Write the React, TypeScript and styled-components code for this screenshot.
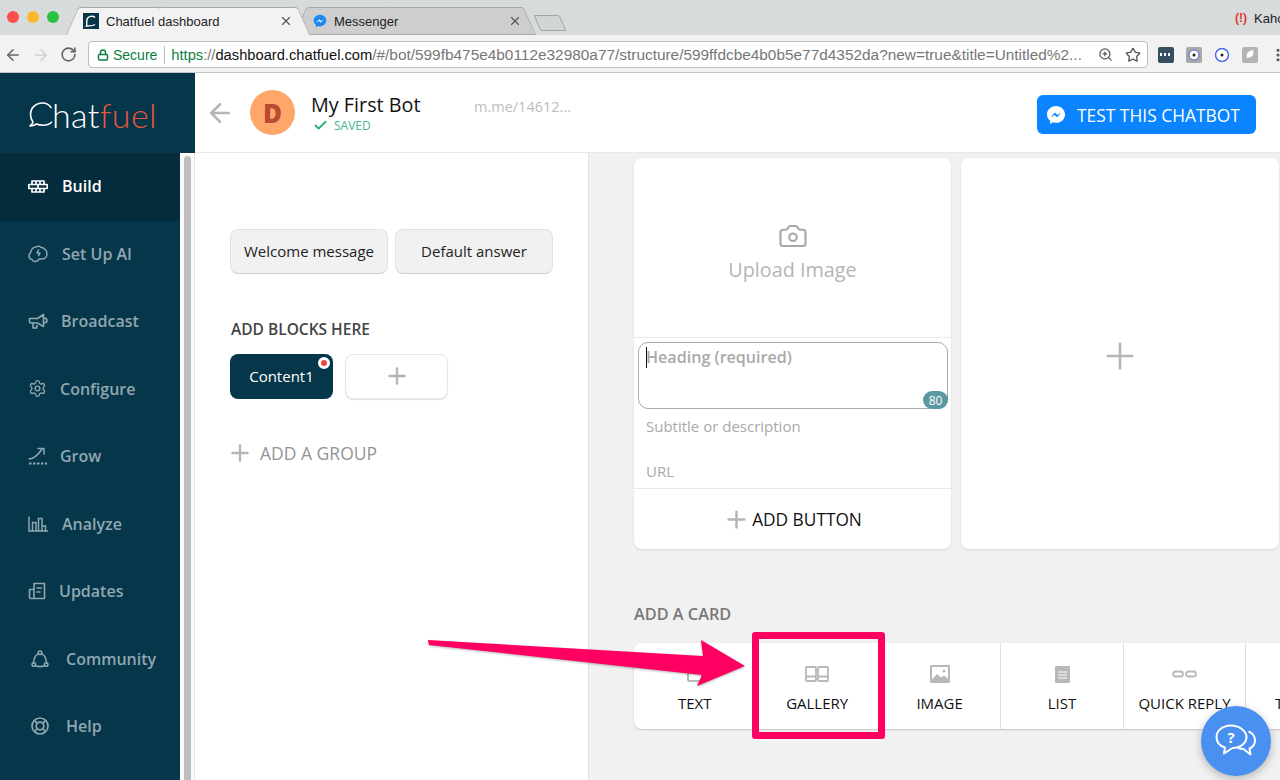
import React from "react";
import styled, { createGlobalStyle } from "styled-components";
import { ArrowLeft, Camera, Check, Plus, RotateCw, Settings, Star, X, ZoomIn, Lock, EllipsisVertical } from "lucide-react";

const GlobalStyle = createGlobalStyle`
  html, body { margin: 0; padding: 0; background: #fff; }
  body { font-family: "Open Sans", "Liberation Sans", sans-serif; }
  * { box-sizing: border-box; }
`;

const Screen = styled.div`
  position: relative;
  width: 1280px;
  height: 780px;
  overflow: hidden;
  display: flex;
  flex-direction: column;
`;

/* browser chrome */
const TabStrip = styled.div`
  height: 35px;
  flex: none;
  display: flex;
  align-items: flex-end;
  padding-left: 7px;
  background: #d7dbdb;
  font-family: "Liberation Sans", sans-serif;
`;

const Lights = styled.div`
  display: flex;
  gap: 8px;
  align-self: flex-start;
  margin-top: 11px;
`;

const Light = styled.span<{ $color: string }>`
  width: 12px;
  height: 12px;
  border-radius: 50%;
  background: ${(p) => p.$color};
`;

const Tab = styled.div<{ $active?: boolean }>`
  position: relative;
  z-index: ${(p) => (p.$active ? 2 : 1)};
  height: 28px;
  width: ${(p) => (p.$active ? 232 : 230)}px;
  margin-left: ${(p) => (p.$active ? 13 : -4)}px;
  padding: ${(p) => (p.$active ? "0 11px" : "0 8px 0 13px")};
  display: flex;
  align-items: center;
  gap: 7px;
  font-size: 13px;
  color: #222;

  &::before,
  &::after {
    content: "";
    position: absolute;
    top: 0;
    bottom: 0;
    width: 60%;
    z-index: -1;
    background: ${(p) => (p.$active ? "#f2f2f2" : "#cecece")};
    border: 1px solid #a8a8a8;
    border-bottom: ${(p) => (p.$active ? "none" : "1px solid #a8a8a8")};
    border-radius: 3px 3px 0 0;
  }
  &::before {
    left: 0;
    border-right: none;
    transform: skewX(-24deg);
  }
  &::after {
    right: 0;
    border-left: none;
    transform: skewX(24deg);
  }
`;

const TabClose = styled(X)`
  margin-left: auto;
  color: #555;
`;

const NewTab = styled.div`
  width: 26px;
  height: 16px;
  margin: 0 0 4px 7px;
  background: #d2d5d5;
  border: 1px solid #a4a4a4;
  border-radius: 2px;
  transform: skewX(24deg);
`;

const ProfileChip = styled.div`
  margin-left: auto;
  align-self: flex-start;
  width: 45px;
  margin-top: 11px;
  display: flex;
  gap: 7px;
  font-size: 13px;
  color: #222;
  white-space: nowrap;
  overflow: hidden;
`;

const ProfileMark = styled.span`
  color: #e03a30;
  font-size: 12px;
  font-weight: 700;
`;

const Toolbar = styled.div`
  height: 38px;
  flex: none;
  display: flex;
  align-items: flex-start;
  padding-top: 6px;
  background: #f2f2f2;
  border-bottom: 1px solid #c4c4c4;
  font-family: "Liberation Sans", sans-serif;
`;

const NavButtons = styled.div`
  width: 88px;
  flex: none;
  height: 27px;
  padding-left: 4px;
  display: flex;
  align-items: center;
  gap: 10px;
  color: #666;
`;

const AddressBox = styled.div`
  width: 1060px;
  flex: none;
  height: 27px;
  display: flex;
  align-items: center;
  padding: 0 6px 0 8px;
  background: #fff;
  border: 1px solid #bdbdbd;
  border-radius: 4px;
  font-size: 14px;
  white-space: nowrap;
`;

const Secure = styled.span`
  display: flex;
  align-items: center;
  gap: 4px;
  color: #0b8043;
  padding-right: 7px;
  border-right: 1px solid #bbb;
  margin-right: 6px;
  line-height: 18px;
`;

const Url = styled.span<{ $tone: string; $size?: number }>`
  color: ${(p) => p.$tone};
  font-size: ${(p) => p.$size ?? 14.7}px;
`;

const AddressActions = styled.span`
  margin-left: auto;
  display: flex;
  align-items: center;
  gap: 12px;
  color: #555;
`;

const Extensions = styled.div`
  display: flex;
  align-items: center;
  gap: 12px;
  height: 27px;
  margin-left: 10px;
`;

const Extension = styled.span<{ $bg: string; $round?: boolean }>`
  width: 16px;
  height: 16px;
  display: flex;
  align-items: center;
  justify-content: center;
  background: ${(p) => p.$bg};
  border-radius: ${(p) => (p.$round ? "50%" : "2px")};
`;

/* page */
const Page = styled.div`
  flex: 1;
  min-height: 0;
  display: flex;
`;

const Sidebar = styled.aside`
  width: 195px;
  flex: none;
  display: flex;
  flex-direction: column;
`;

const LogoBar = styled.div`
  height: 80px;
  flex: none;
  display: flex;
  align-items: center;
  padding: 2px 0 0 29px;
  background: #063649;
`;

const LogoText = styled.span`
  font-family: "Lato", sans-serif;
  font-weight: 300;
  font-size: 34px;
  letter-spacing: 0.4px;
  color: #fff;
  margin-left: -1px;
`;

const LogoAccent = styled.span`
  color: #e8553f;
`;

const SideBody = styled.div`
  flex: 1;
  min-height: 0;
  display: flex;
`;

const Nav = styled.nav`
  width: 180px;
  background: #063649;
`;

const NavRow = styled.div<{ $active?: boolean; $indent: number; $gap: number }>`
  height: 67.5px;
  padding-bottom: 1px;
  display: flex;
  align-items: center;
  gap: ${(p) => p.$gap}px;
  padding-left: ${(p) => p.$indent}px;
  background: ${(p) => (p.$active ? "#052c3c" : "transparent")};
  color: ${(p) => (p.$active ? "#fff" : "#8fa7b1")};
  font-size: 16px;
  font-weight: 600;
`;

const ScrollTrack = styled.div`
  width: 15px;
  padding: 3px 3px 0 4px;
  background: #fafafa;
  border-right: 1px solid #e6e6e6;
`;

const ScrollThumb = styled.div`
  height: 100%;
  background: #bfbfbf;
  border-radius: 4px 4px 0 0;
`;

const Main = styled.main`
  flex: 1;
  min-width: 0;
  display: flex;
  flex-direction: column;
`;

const TopBar = styled.header`
  height: 80px;
  flex: none;
  display: flex;
  align-items: center;
  padding: 0 24px 0 15px;
  background: #fff;
  border-bottom: 1px solid #e8e8e8;
`;

const BackIcon = styled(ArrowLeft)`
  color: #b5b5b5;
  flex: none;
  margin: 0 -5px;
`;

const Avatar = styled.div`
  width: 45px;
  height: 45px;
  margin: 0 16px 0 20px;
  flex: none;
  display: flex;
  align-items: center;
  justify-content: center;
  border-radius: 50%;
  background: #ffa76b;
  color: #bb4a30;
  font-size: 26px;
  font-weight: 800;
`;

const BotInfo = styled.div`
  width: 163px;
  margin-top: -1px;
`;

const BotName = styled.div`
  font-size: 19.8px;
  line-height: 27px;
  color: #111;
`;

const SavedRow = styled.div`
  display: flex;
  align-items: center;
  gap: 6px;
  padding-left: 2px;
  font-size: 12px;
  line-height: 16px;
  color: #45b98c;
`;

const BotLink = styled.div`
  margin-top: -12px;
  font-size: 14.5px;
  color: #bcbcbc;
`;

const TestButton = styled.button`
  margin: 3px 0 0 auto;
  width: 219px;
  height: 39px;
  display: flex;
  align-items: center;
  gap: 11px;
  padding: 1px 0 0 9px;
  border: none;
  border-radius: 6px;
  background: #0a84ff;
  color: #fff;
  font-family: inherit;
  font-size: 17.4px;
`;

const Body = styled.div`
  flex: 1;
  min-height: 0;
  display: flex;
`;

const LeftPane = styled.section`
  width: 394px;
  flex: none;
  padding: 76px 0 0 35px;
  background: #fff;
  border-right: 1px solid #e2e2e2;
`;

const ButtonRow = styled.div`
  display: flex;
  gap: 7px;
`;

const GreyButton = styled.div`
  width: 158px;
  height: 45px;
  padding-bottom: 2px;
  display: flex;
  align-items: center;
  justify-content: center;
  background: #f2f1f2;
  border: 1px solid #e2e2e2;
  border-bottom-color: #d0d0d0;
  border-radius: 8px;
  font-size: 15px;
  color: #222;
`;

const BlocksTitle = styled.h3`
  margin: 44px 0 14px 1px;
  font-size: 15.5px;
  line-height: 22px;
  font-weight: 600;
  color: #444;
`;

const BlockRow = styled.div`
  display: flex;
  gap: 12px;
`;

const BlockCard = styled.div<{ $filled?: boolean }>`
  position: relative;
  width: 103px;
  height: 45px;
  padding-bottom: 2px;
  display: flex;
  align-items: center;
  justify-content: center;
  border-radius: 8px;
  font-size: 15px;
  color: ${(p) => (p.$filled ? "#fff" : "#b5b5b5")};
  background: ${(p) => (p.$filled ? "#063649" : "#fff")};
  border: ${(p) => (p.$filled ? "none" : "1px solid #e8e8e8")};
  box-shadow: ${(p) => (p.$filled ? "none" : "0 1px 1px #e2e2e2")};
`;

const StatusDot = styled.span`
  position: absolute;
  top: 3px;
  right: 3px;
  width: 12px;
  height: 12px;
  border-radius: 50%;
  background: #e8493f;
  border: 3px solid #fff;
`;

const AddGroup = styled.div`
  margin: 41px 0 0 -3px;
  display: flex;
  align-items: center;
  gap: 7px;
  font-size: 17.5px;
  line-height: 24px;
  color: #949494;
`;

const GreyPlus = styled(Plus)`
  color: #b5b5b5;
  flex: none;
`;

const RightPane = styled.section`
  flex: 1;
  min-width: 0;
  padding: 5px 0 0 45px;
  background: #f2f1f2;
`;

const CardRow = styled.div`
  display: flex;
  gap: 10px;
`;

const Card = styled.div<{ $wide?: boolean }>`
  width: ${(p) => (p.$wide ? 318 : 317)}px;
  height: 391px;
  flex: none;
  display: flex;
  flex-direction: column;
  background: #fff;
  border-radius: 8px;
  box-shadow: 0 1px 2px rgba(0, 0, 0, 0.12);
`;

const EmptyCardBody = styled.div`
  flex: 1;
  padding-top: 4px;
  display: flex;
  align-items: center;
  justify-content: center;
  color: #b5b5b5;
`;

const UploadArea = styled.div`
  height: 180px;
  flex: none;
  display: flex;
  flex-direction: column;
  align-items: center;
  padding-top: 63px;
  gap: 5px;
  border-bottom: 1px solid #e8e8e8;
  color: #a8a8a8;
`;

const UploadLabel = styled.div`
  font-size: 19.8px;
  line-height: 27px;
  color: #b5b5b5;
`;

const HeadingBox = styled.div`
  position: relative;
  height: 67px;
  margin: 4px 3px 0 4px;
  padding: 3px 7px;
  border: 1px solid #aaa;
  border-radius: 10px;
  font-size: 16.1px;
  line-height: 23px;
  font-weight: 600;
  color: #a9a9a9;
`;

const Caret = styled.span`
  position: absolute;
  left: 7px;
  top: 4px;
  width: 1px;
  height: 21px;
  background: #111;
`;

const CountBadge = styled.span`
  position: absolute;
  right: -1px;
  bottom: -1px;
  width: 25px;
  height: 18px;
  display: flex;
  align-items: center;
  justify-content: center;
  border-radius: 9px;
  background: #5b98a0;
  color: #fff;
  font-size: 12px;
  font-weight: 400;
`;

const FieldLine = styled.div`
  height: 45px;
  padding: 7px 0 0 12px;
  font-size: 15px;
  line-height: 20px;
  color: #a9a9a9;
`;

const FieldLast = styled(FieldLine)`
  height: 35px;
  padding-top: 7px;
  border-bottom: 1px solid #e8e8e8;
`;

const AddButton = styled.div`
  flex: 1;
  display: flex;
  align-items: center;
  justify-content: center;
  gap: 2px;
  font-size: 17.3px;
  color: #111;
`;

const AddCardTitle = styled.h3`
  margin: 54px 0 18px;
  font-size: 16.3px;
  line-height: 22px;
  font-weight: 600;
  color: #777;
`;

const CardTypes = styled.div`
  width: 800px;
  height: 86px;
  display: flex;
  background: #fff;
  border-radius: 8px 0 0 8px;
  box-shadow: 0 1px 2px rgba(0, 0, 0, 0.18);
`;

const CardType = styled.div`
  width: 122.45px;
  flex: none;
  display: flex;
  flex-direction: column;
  align-items: center;
  border-right: 1px solid #dedede;
  font-size: 15px;
  color: #111;

  &:last-child {
    padding-right: 12px;
  }
`;

const CardTypeIcon = styled.div`
  height: 50px;
  padding-top: 12px;
  display: flex;
  align-items: center;
  justify-content: center;
  color: #b8b8b8;
`;

/* things lying over the page */
const Highlight = styled.div`
  position: absolute;
  left: 752px;
  top: 632px;
  width: 133px;
  height: 107px;
  border: 7px solid #ff0062;
  border-radius: 3px;
`;

const ArrowDrawing = styled.svg`
  position: absolute;
  left: 420px;
  top: 630px;
  filter: drop-shadow(0 1px 1px rgba(0, 0, 0, 0.3));
`;

const HelpBubble = styled.div`
  position: absolute;
  left: 1201px;
  top: 706px;
  width: 70px;
  height: 70px;
  display: flex;
  align-items: center;
  justify-content: center;
  border-radius: 50%;
  background: #4a90f0;
  box-shadow: 0 3px 10px rgba(0, 0, 0, 0.25);
`;

/* drawings */
const stroke = {
  fill: "none",
  stroke: "currentColor",
  strokeWidth: 2,
  strokeLinecap: "round" as const,
  strokeLinejoin: "round" as const,
};

const BuildIcon = () => (
  <svg width="20" height="13" viewBox="0 0 20 13" {...stroke} strokeWidth={1.7} strokeLinecap="butt">
    <path d="M4 1h12v3.500h3.200v4H16V12H4V8.500H.8v-4H4z" />
    <path d="M4 4.500h12M4 8.500h12M8 1v3.500M12 1v3.500M10 4.500v4M8 8.500V12M12 8.500V12" />
  </svg>
);
const BrainIcon = () => (
  <svg width="20" height="18" viewBox="0 0 20 18" {...stroke} strokeWidth={1.5}>
    <path d="M6.500 16.500c-1 0-2-.8-2.200-1.800C2.300 14.300 1 12.700 1 10.800c0-1.500.7-2.700 1.800-3.400C3 4.400 5.300 2 8 2c1-1 4-1.200 5.200.5 3 .2 5.800 2.800 5.800 6.300 0 3-2 5.200-4.800 5.200H11c-.5 1.500-2.500 2.500-4.500 2.500z" />
    <path d="M10.500 5 9 8h3l-1.500 2.500" />
  </svg>
);
const MegaphoneIcon = () => (
  <svg width="20" height="17" viewBox="0 0 20 17" {...stroke} strokeWidth={1.6}>
    <path d="M1.500 5.500h8L15.500 1.500v12L9.500 10H2.800C2 10 1.500 9.500 1.500 8.800z" />
    <path d="M15.500 5c2.200 0 3.500 1 3.500 2.500S17.700 10 15.500 10M5 10v5h3.500l.5-2.500" />
  </svg>
);
const GrowIcon = () => (
  <svg width="20" height="18" viewBox="0 0 20 18" {...stroke} strokeWidth={1.5}>
    <path d="M1 12c5-.5 8-3 13.500-10.500M10 1.500h6V7" />
    <path d="M1 16.500h18" strokeDasharray="2.500 1.500" strokeLinecap="butt" strokeWidth={1.800} />
  </svg>
);
const BarsIcon = () => (
  <svg width="20" height="16" viewBox="0 0 20 16" {...stroke} strokeWidth={1.500} strokeLinecap="butt" strokeLinejoin="miter">
    <path d="M1 .5V15h19M4.500 15V6.500H8V15M8 15V9.500M10.500 15V2.500H14V15M14 15v-5h3.500v5" />
  </svg>
);
const UpdatesIcon = () => (
  <svg width="18" height="18" viewBox="0 0 18 18" {...stroke} strokeWidth={1.6}>
    <path d="M6 1.500h10.500v15H2.500a1 1 0 0 1-1-1V7.500h4.500zM6 7.500v9" />
    <path d="M9 6h4.500M9 10h3" />
  </svg>
);
const CommunityIcon = () => (
  <svg width="18" height="18" viewBox="0 0 18 18" {...stroke} strokeWidth={1.5}>
    <circle cx="9" cy="2.800" r="1.800" />
    <circle cx="2.800" cy="14.500" r="1.800" />
    <circle cx="15.200" cy="14.500" r="1.800" />
    <path d="M7.300 3.600C4.500 5 3 8 2.500 12.700M10.700 3.600C13.500 5 15 8 15.500 12.700M4.500 15.500c3 1.500 6 1.500 9 0" />
  </svg>
);
const HelpIcon = () => (
  <svg width="18" height="18" viewBox="0 0 18 18" {...stroke} strokeWidth={1.7}>
    <circle cx="9" cy="9" r="8" />
    <circle cx="9" cy="9" r="3.800" />
    <path d="M3.500 3.500l2.800 2.800M14.500 3.500l-2.800 2.800M3.500 14.500l2.800-2.800M14.500 14.500l-2.800-2.800" />
  </svg>
);
const MessengerGlyph = ({ size, bg, fg }: { size: number; bg: string; fg: string }) => (
  <svg width={size} height={size} viewBox="0 0 20 20">
    <path
      d="M10 1C5 1 1 4.700 1 9.400c0 2.600 1.200 4.800 3.200 6.300V19l3-1.700c.9.300 1.800.4 2.800.4 5 0 9-3.700 9-8.300S15 1 10 1z"
      fill={bg}
    />
    <path d="M4.500 12.200 9 7.500l2.400 2.400 4.200-2.400-4.600 4.800-2.300-2.400z" fill={fg} />
  </svg>
);
const ChatfuelFavicon = () => (
  <svg width="16" height="16" viewBox="0 0 16 16">
    <rect width="16" height="16" fill="#063649" />
    <path d="M12 4.500C10 2.600 5 2.800 4 6.500c-.6 2.500 0 5.500-.5 6.500 2-.5 6 .5 8.500-1.500" fill="none" stroke="#fff" strokeWidth="1.400" />
  </svg>
);
const LogoBubble = () => (
  <svg width="24" height="25" viewBox="0 0 24 25" fill="none" stroke="#fff" strokeWidth="1.600" strokeLinecap="round" strokeLinejoin="round">
    <path d="M22 5.500C20 2.500 17 1 13.500 1 6.500 1 1.500 6 1.500 12.500c0 3 1 5.500 2.500 7.500-.5 1.500-1.500 3-3 4 3 0 5-1 6.500-2 1.800.8 4 1.200 6.500 1.200 3.500 0 6.500-1 8.500-3" />
  </svg>
);
const TextCardIcon = () => (
  <svg width="16" height="16" viewBox="0 0 16 16" fill="none" stroke="currentColor" strokeWidth="2">
    <rect x="1" y="1" width="14" height="14" rx="1.500" />
    <path d="M4 6h8" />
  </svg>
);
const GalleryIcon = () => (
  <svg width="24" height="16" viewBox="0 0 24 16" fill="none" stroke="currentColor" strokeWidth="1.800">
    <rect x="1" y="1" width="10" height="14" rx="1" />
    <rect x="13" y="1" width="10" height="14" rx="1" />
    <path d="M1 10.500h10M13 10.500h10" />
  </svg>
);
const ImageIcon = () => (
  <svg width="20" height="18" viewBox="0 0 20 18">
    <rect width="20" height="18" rx="1" fill="currentColor" />
    <rect x="2" y="2" width="16" height="14" fill="#fff" />
    <path d="M2 14.500 7 9l4 3.500 3-2 4 3V16H2z" fill="currentColor" />
    <circle cx="14" cy="6" r="1.500" fill="currentColor" />
  </svg>
);
const ListIcon = () => (
  <svg width="15" height="17" viewBox="0 0 15 17">
    <rect width="15" height="17" rx="1" fill="currentColor" />
    <path d="M3 6h9M3 9h9M3 12h9" stroke="#fff" strokeWidth="1.200" />
  </svg>
);
const QuickReplyIcon = () => (
  <svg width="25" height="8" viewBox="0 0 25 8" fill="none" stroke="currentColor" strokeWidth="1.800">
    <rect x="1" y="1.500" width="10" height="5" rx="2.500" />
    <rect x="14" y="1.500" width="10" height="5" rx="2.500" />
  </svg>
);
const HelpChatIcon = () => (
  <svg width="42" height="34" viewBox="0 0 42 34" fill="none" stroke="#fff" strokeWidth="2" strokeLinejoin="round">
    <path d="M16 1.500C8 1.500 1.500 6.500 1.500 13c0 5 3.500 9 8.500 10.500l-1 6 8.500-5.500c8 0 14-5 14-11S24 1.500 16 1.500z" />
    <path d="M33.500 7.500c4 1.500 6.500 5 6.500 9 0 3.500-2 6.500-5.500 8l1 6-7-5.500c-2 0-4-.5-6-1.500" />
    <text x="16" y="18.500" textAnchor="middle" fill="#fff" stroke="none" fontSize="15" fontWeight="700" fontFamily="Open Sans, sans-serif">?</text>
  </svg>
);

const navItems = [
  { label: "Build", icon: <BuildIcon />, indent: 28, gap: 14, active: true },
  { label: "Set Up AI", icon: <BrainIcon />, indent: 28, gap: 14 },
  { label: "Broadcast", icon: <MegaphoneIcon />, indent: 28, gap: 13 },
  { label: "Configure", icon: <Settings size={19} strokeWidth={1.7} />, indent: 28, gap: 13 },
  { label: "Grow", icon: <GrowIcon />, indent: 28, gap: 12 },
  { label: "Analyze", icon: <BarsIcon />, indent: 28, gap: 14 },
  { label: "Updates", icon: <UpdatesIcon />, indent: 28, gap: 13 },
  { label: "Community", icon: <CommunityIcon />, indent: 31, gap: 17 },
  { label: "Help", icon: <HelpIcon />, indent: 31, gap: 17 },
];

const cardTypes = [
  { label: "TEXT", icon: <TextCardIcon /> },
  { label: "GALLERY", icon: <GalleryIcon /> },
  { label: "IMAGE", icon: <ImageIcon /> },
  { label: "LIST", icon: <ListIcon /> },
  { label: "QUICK REPLY", icon: <QuickReplyIcon /> },
  { label: "TYPING", icon: null },
];

export default function App() {
  return (
    <Screen>
      <GlobalStyle />
      <TabStrip>
        <Lights>
          <Light $color="#fc4d48" />
          <Light $color="#fdb72c" />
          <Light $color="#29c23f" />
        </Lights>
        <Tab $active>
          <ChatfuelFavicon />
          Chatfuel dashboard
          <TabClose size={14} strokeWidth={2} />
        </Tab>
        <Tab>
          <MessengerGlyph size={14} bg="#1e88f5" fg="#fff" />
          Messenger
          <TabClose size={14} strokeWidth={2} />
        </Tab>
        <NewTab />
        <ProfileChip>
          <ProfileMark>(!)</ProfileMark>
          Kaho
        </ProfileChip>
      </TabStrip>
      <Toolbar>
        <NavButtons>
          <ArrowLeft size={18} />
          <ArrowLeft size={18} color="#cfcfcf" style={{ transform: "scaleX(-1)" }} />
          <RotateCw size={17} strokeWidth={2.4} />
        </NavButtons>
        <AddressBox>
          <Secure>
            <Lock size={12} strokeWidth={3} />
            Secure
          </Secure>
          <Url $tone="#0b8043">https</Url>
          <Url $tone="#777">://</Url>
          <Url $tone="#111">dashboard.chatfuel.com</Url>
          <Url $tone="#777" $size={15.4}>/#/bot/599fb475e4b0112e32980a77/structure/599ffdcbe4b0b5e77d4352da?new=true&amp;title=Untitled%2...</Url>
          <AddressActions>
            <ZoomIn size={15} />
            <Star size={16} />
          </AddressActions>
        </AddressBox>
        <Extensions>
          <Extension $bg="#34505f">
            <svg width="12" height="4" viewBox="0 0 12 4" fill="#fff">
              <rect width="2" height="3" />
              <rect x="4" width="2" height="3" />
              <rect x="8" width="2" height="3" />
            </svg>
          </Extension>
          <Extension $bg="#a9a9a9">
            <svg width="12" height="12" viewBox="0 0 12 12">
              <circle cx="6" cy="6" r="5" fill="#fff" stroke="#5866c8" />
              <circle cx="6" cy="6" r="1.500" fill="#222" />
            </svg>
          </Extension>
          <Extension $bg="#fff" $round>
            <svg width="16" height="16" viewBox="0 0 16 16">
              <circle cx="8" cy="8" r="6.500" fill="#fff" stroke="#4a6de0" strokeWidth="1.500" />
              <circle cx="8" cy="8" r="1.500" fill="#222" />
            </svg>
          </Extension>
          <Extension $bg="#b4b4b4">
            <svg width="10" height="11" viewBox="0 0 10 11">
              <path d="M2 9c-1-3 0-7 6-8 1 4 0 8-6 8z" fill="#fff" />
            </svg>
          </Extension>
          <EllipsisVertical size={16} color="#555" strokeWidth={2.6} />
        </Extensions>
      </Toolbar>

      <Page>
        <Sidebar>
          <LogoBar>
            <LogoBubble />
            <LogoText>
              hat<LogoAccent>fuel</LogoAccent>
            </LogoText>
          </LogoBar>
          <SideBody>
            <Nav>
              {navItems.map((item) => (
                <NavRow key={item.label} $active={item.active} $indent={item.indent} $gap={item.gap}>
                  {item.icon}
                  {item.label}
                </NavRow>
              ))}
            </Nav>
            <ScrollTrack>
              <ScrollThumb />
            </ScrollTrack>
          </SideBody>
        </Sidebar>

        <Main>
          <TopBar>
            <BackIcon size={30} strokeWidth={2} />
            <Avatar>D</Avatar>
            <BotInfo>
              <BotName>My First Bot</BotName>
              <SavedRow>
                <Check size={15} strokeWidth={3} color="#27b070" />
                SAVED
              </SavedRow>
            </BotInfo>
            <BotLink>m.me/14612...</BotLink>
            <TestButton>
              <MessengerGlyph size={20} bg="#fff" fg="#0a84ff" />
              TEST THIS CHATBOT
            </TestButton>
          </TopBar>

          <Body>
            <LeftPane>
              <ButtonRow>
                <GreyButton>Welcome message</GreyButton>
                <GreyButton>Default answer</GreyButton>
              </ButtonRow>
              <BlocksTitle>ADD BLOCKS HERE</BlocksTitle>
              <BlockRow>
                <BlockCard $filled>
                  Content1
                  <StatusDot />
                </BlockCard>
                <BlockCard>
                  <Plus size={26} strokeWidth={2.2} />
                </BlockCard>
              </BlockRow>
              <AddGroup>
                <GreyPlus size={26} strokeWidth={2.2} />
                ADD A GROUP
              </AddGroup>
            </LeftPane>

            <RightPane>
              <CardRow>
                <Card>
                  <UploadArea>
                    <Camera size={30} strokeWidth={1.7} />
                    <UploadLabel>Upload Image</UploadLabel>
                  </UploadArea>
                  <HeadingBox>
                    <Caret />
                    Heading (required)
                    <CountBadge>80</CountBadge>
                  </HeadingBox>
                  <FieldLine>Subtitle or description</FieldLine>
                  <FieldLast>URL</FieldLast>
                  <AddButton>
                    <GreyPlus size={27} strokeWidth={2.2} />
                    ADD BUTTON
                  </AddButton>
                </Card>
                <Card $wide>
                  <EmptyCardBody>
                    <Plus size={42} strokeWidth={1.5} />
                  </EmptyCardBody>
                </Card>
              </CardRow>
              <AddCardTitle>ADD A CARD</AddCardTitle>
              <CardTypes>
                {cardTypes.map((type) => (
                  <CardType key={type.label}>
                    <CardTypeIcon>{type.icon}</CardTypeIcon>
                    {type.label}
                  </CardType>
                ))}
              </CardTypes>
            </RightPane>
          </Body>
        </Main>
      </Page>

      <Highlight />
      <ArrowDrawing width="340" height="70" viewBox="0 0 340 70">
        <path d="M8 10 9 15 282 45 277 56 325 36 281 10 283 26z" fill="#ff0062" />
      </ArrowDrawing>
      <HelpBubble>
        <HelpChatIcon />
      </HelpBubble>
    </Screen>
  );
}
